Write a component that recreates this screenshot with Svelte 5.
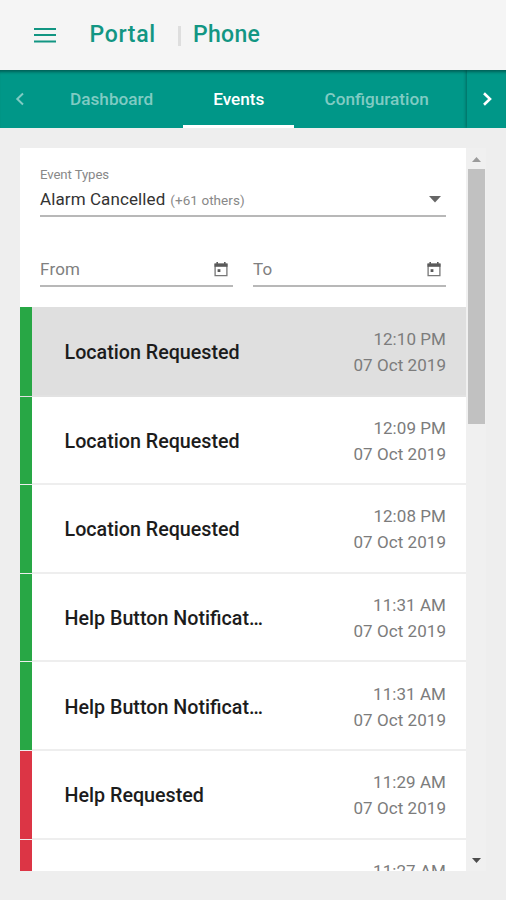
<script>
  const tabs = ['Dashboard', 'Events', 'Configuration']

  const events = [
    { title: 'Location Requested', time: '12:10 PM', level: 'normal' },
    { title: 'Location Requested', time: '12:09 PM', level: 'normal' },
    { title: 'Location Requested', time: '12:08 PM', level: 'normal' },
    { title: 'Help Button Notification', time: '11:31 AM', level: 'normal' },
    { title: 'Help Button Notification', time: '11:31 AM', level: 'normal' },
    { title: 'Help Requested', time: '11:29 AM', level: 'alert' },
    { title: '', time: '11:27 AM', level: 'alert' },
  ]

  let activeTab = $state('Events')
  let selected = $state(0)
</script>

<div class="app">
  <header>
    <button class="menu" type="button" aria-label="Menu">
      <svg width="24" height="18" viewBox="0 0 24 18">
        <path d="M1 3H23M1 9H23M1 15.5H23" stroke="currentColor" stroke-width="2" />
      </svg>
    </button>
    <h1>Portal</h1>
    <span class="divider"></span>
    <h2>Phone</h2>
  </header>

  <nav>
    <button class="arrow prev" type="button" aria-label="Previous tabs">
      <svg width="10" height="14" viewBox="0 0 10 14">
        <path d="M8 1.5L2.3 7L8 12.5" fill="none" stroke="currentColor" stroke-width="2" />
      </svg>
    </button>
    <div class="tabs">
      {#each tabs as tab}
        <button class="tab" class:active={activeTab === tab} type="button" onclick={() => (activeTab = tab)}>
          {tab}
        </button>
      {/each}
    </div>
    <button class="arrow next" type="button" aria-label="Next tabs">
      <svg width="10" height="14" viewBox="0 0 10 14">
        <path d="M2 1.2L8 7L2 12.8" fill="none" stroke="currentColor" stroke-width="2.6" />
      </svg>
    </button>
  </nav>

  <main>
    <section class="panel">
      <div class="filters">
        <div class="select">
          <span class="caption">Event Types</span>
          <div class="value">
            <span class="chosen">Alarm Cancelled</span>
            <span class="others">(+61 others)</span>
            <svg width="12" height="7" viewBox="0 0 12 7"><path d="M0 0H12L6 6.6Z" fill="#666" /></svg>
          </div>
        </div>
        <div class="dates">
          {#each ['From', 'To'] as label}
            <div class="date">
              <span>{label}</span>
              <svg width="14" height="15" viewBox="0 0 14 15">
                <path d="M3.2 0V3M10.8 0V3" stroke="#5a5a5a" stroke-width="1.6" />
                <path d="M1.1 2.2H12.9V13.7H1.1Z" fill="none" stroke="#777" stroke-width="1.3" />
                <path d="M.5 1.6H13.5V4.8H.5Z" fill="#5a5a5a" />
                <path d="M3.6 7.2H6.4V10H3.6Z" fill="#5a5a5a" />
              </svg>
            </div>
          {/each}
        </div>
      </div>

      <div class="list">
        {#each events as event, index}
          <button class="row" class:selected={selected === index} type="button" onclick={() => (selected = index)}>
            <span class="bar {event.level}"></span>
            <strong>{event.title}</strong>
            <span class="when">{event.time}<br />07 Oct 2019</span>
          </button>
        {/each}
      </div>
    </section>

    <div class="scrollbar">
      <svg width="9" height="5" viewBox="0 0 9 5"><path d="M0 5L4.5 0L9 5Z" fill="#9b9b9b" /></svg>
      <div class="thumb"></div>
      <svg class="down" width="9" height="5" viewBox="0 0 9 5"><path d="M0 0H9L4.5 5Z" fill="#4c4c4c" /></svg>
    </div>
  </main>
</div>

<style>
  :global(body) {
    background: #eee;
  }

  .app {
    display: flex;
    flex-direction: column;
    height: 900px;
    overflow: hidden;
    background: #eee;
    font-family: Roboto, sans-serif;
  }

  button {
    border: 0;
    padding: 0;
    background: transparent;
    font: inherit;
    cursor: pointer;
  }

  svg {
    display: block;
    flex: none;
  }

  header {
    display: flex;
    align-items: center;
    box-sizing: border-box;
    height: 70px;
    padding: 0 0 1px 33px;
    background: #f5f5f5;
    color: #129683;
  }

  .menu {
    margin-right: 32px;
    padding-top: 1px;
    color: inherit;
  }

  h1,
  h2 {
    margin: 0;
    font-size: 23px;
    font-weight: 500;
    letter-spacing: 0.7px;
  }

  h1 {
    width: 88px;
    text-indent: 0.5px;
  }

  h2 {
    letter-spacing: 0.3px;
  }

  .divider {
    width: 3px;
    height: 20px;
    margin: 2px 12px 0 1px;
    background: #dedede;
  }

  nav {
    display: flex;
    flex: none;
    height: 58px;
    background: #009788;
    box-shadow: inset 0 4px 3px -2px rgba(0, 50, 45, 0.55);
  }

  .arrow {
    display: flex;
    align-items: center;
    justify-content: center;
    width: 40px;
  }

  .prev {
    color: #80cbc3;
  }

  .next {
    width: 39px;
    color: #fff;
    box-shadow: -1px 0 3px rgba(0, 0, 0, 0.3);
    clip-path: inset(0 0 0 -6px);
  }

  .tabs {
    display: flex;
    flex: 1;
  }

  .tab {
    box-sizing: border-box;
    padding: 3px 30px 0;
    border-bottom: 3px solid transparent;
    color: #80cbc3;
    font-size: 17.2px;
    font-weight: 500;
  }

  .tab.active {
    border-color: #fff;
    color: #fff;
  }

  main {
    display: flex;
    height: 723px;
    padding: 20px 20px 0;
  }

  .panel {
    flex: none;
    width: 446px;
    overflow: hidden;
    background: #fff;
  }

  .filters {
    box-sizing: border-box;
    height: 159px;
    padding: 18px 20px 0;
    color: #888;
  }

  .caption {
    display: block;
    font-size: 13.2px;
    line-height: 18px;
    letter-spacing: -0.1px;
  }

  .value,
  .date {
    display: flex;
    align-items: center;
    box-sizing: border-box;
    border-bottom: 2px solid #b8b8b8;
  }

  .value {
    height: 33px;
    padding: 0 5px 1px 0;
  }

  .chosen {
    margin-right: 5px;
    color: #333;
    font-size: 17px;
    letter-spacing: 0.1px;
  }

  .others {
    flex: 1;
    padding-top: 2px;
    font-size: 13.5px;
    letter-spacing: 0.05px;
  }

  .dates {
    display: grid;
    grid-template-columns: 1fr 1fr;
    gap: 20px;
    margin-top: 34px;
  }

  .date {
    justify-content: space-between;
    height: 36px;
    padding: 2px 5px 0 0;
    color: #808080;
    font-size: 17px;
    letter-spacing: 0.2px;
  }

  .row {
    display: flex;
    align-items: center;
    box-sizing: border-box;
    width: 100%;
    height: 88.6px;
    padding-right: 20px;
    border-bottom: 2px solid #eee;
    text-align: left;
  }

  .row:first-child {
    height: 89.6px;
  }

  .bar {
    align-self: stretch;
    width: 12px;
    margin: 0 32.5px -1px 0;
    background: #28a745;
  }

  .bar.alert {
    background: #dc3545;
  }

  .row.selected {
    border-color: #e2e2e2;
    background: #dfdfdf;
  }

  strong {
    width: 200px;
    padding-top: 3px;
    overflow: hidden;
    color: #1c1c1c;
    font-size: 19.7px;
    font-weight: 500;
    text-overflow: ellipsis;
    white-space: nowrap;
  }

  .when {
    margin-left: auto;
    padding-top: 2px;
    color: #7c7c7c;
    font-size: 17px;
    line-height: 26px;
    letter-spacing: 0.06px;
    text-align: right;
    white-space: nowrap;
  }

  .scrollbar {
    display: flex;
    flex-direction: column;
    align-items: center;
    box-sizing: border-box;
    width: 20px;
    padding: 9px 0 8px 1px;
    background: #f0f0f0;
  }

  .thumb {
    width: 17px;
    height: 255px;
    margin-top: 7px;
    background: #c1c1c1;
  }

  .down {
    margin-top: auto;
  }
</style>
